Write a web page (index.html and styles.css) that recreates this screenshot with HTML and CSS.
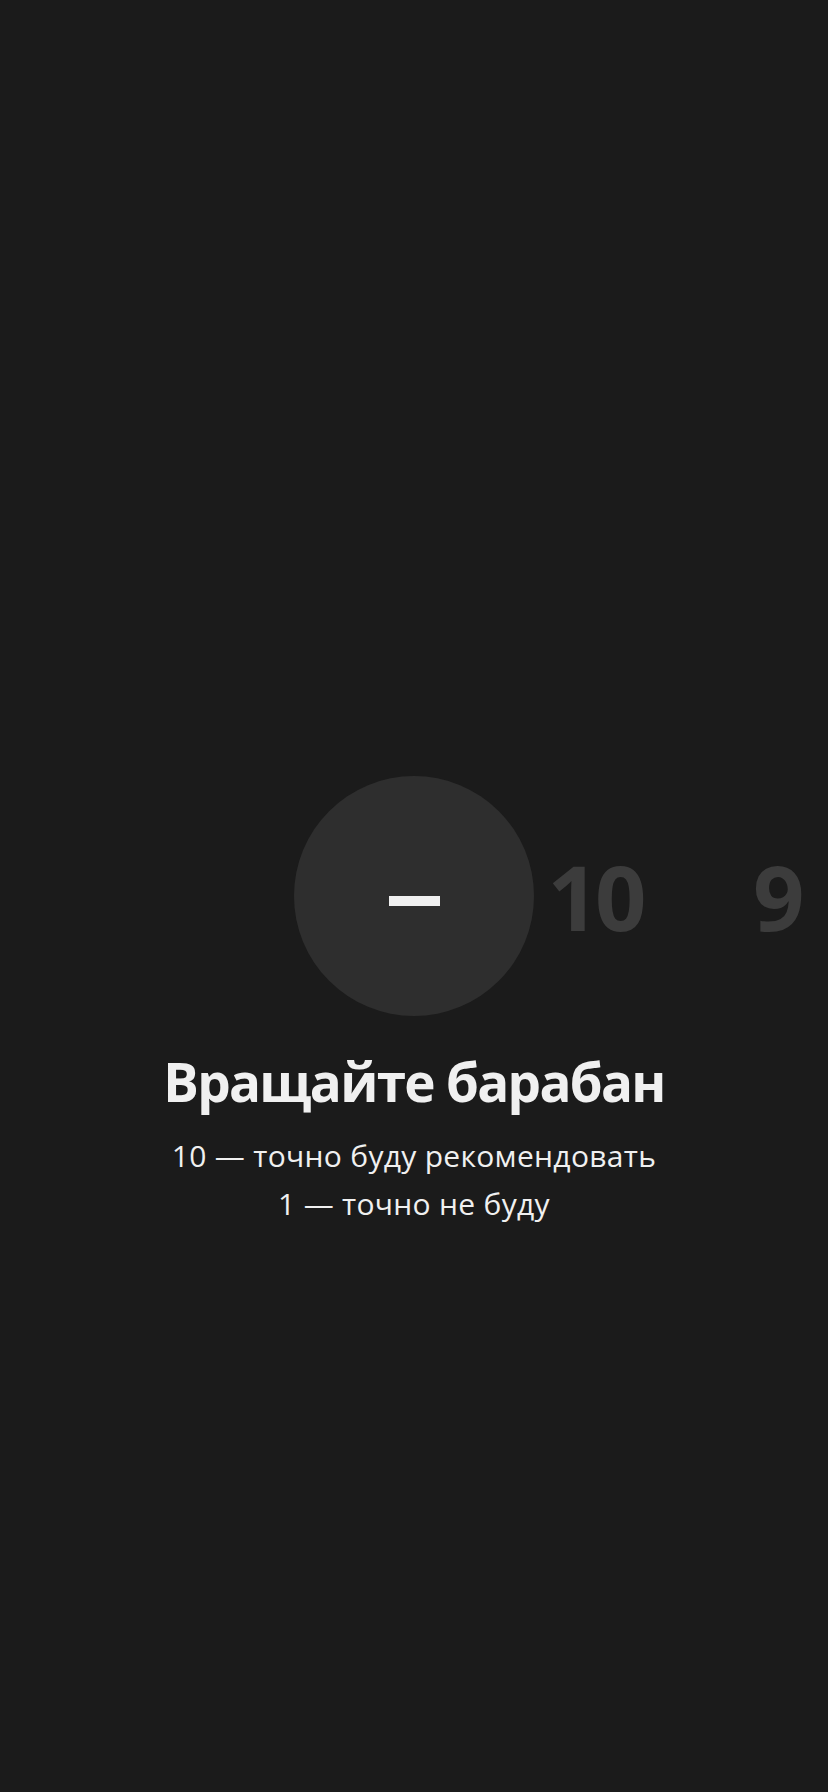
FILE: index.html
```html
<!DOCTYPE html>
<html lang="ru">
<head>
<meta charset="utf-8">
<link rel="stylesheet" href="styles.css">
</head>
<body>
<main class="screen">
  <div class="wheel">
    <div class="slot slot-current"><div class="bubble"><span class="dash"></span></div></div>
    <div class="slot">10</div>
    <div class="slot slot-last">9</div>
  </div>
  <h1 class="title">Вращайте барабан</h1>
  <p class="hint">10 — точно буду рекомендовать<br>1 — точно не буду</p>
</main>
</body>
</html>
```
FILE: styles.css
```css
html, body {
  margin: 0;
  padding: 0;
  background: #1b1b1b;
}
.screen {
  width: 828px;
  height: 1792px;
  box-sizing: border-box;
  padding-top: 776px;
  display: flex;
  flex-direction: column;
  align-items: center;
  overflow: hidden;
  font-family: "Open Sans", "Noto Sans", sans-serif;
}
.wheel {
  width: 828px;
  height: 240px;
  display: flex;
  align-items: center;
  padding-left: 322px;
  box-sizing: border-box;
  overflow: hidden;
}
.slot {
  flex: 0 0 184px;
  width: 184px;
  text-align: center;
  font-family: "Open Sans", sans-serif;
  font-weight: 700;
  font-size: 90px;
  line-height: 240px;
  letter-spacing: -4px;
  color: #3c3c3c;
}
.slot-last {
  flex: 0 0 auto;
  width: auto;
  margin-left: 66px;
}
.slot-current {
  display: flex;
  justify-content: center;
  margin-right: -3px;
}
.bubble {
  flex: 0 0 240px;
  width: 240px;
  height: 240px;
  margin: 0 -28px;
  border-radius: 50%;
  background: #2e2e2e;
  display: flex;
  align-items: center;
  justify-content: center;
}
.dash {
  width: 51px;
  height: 10px;
  margin-top: 10px;
  background: #f0f0f0;
}
.title {
  margin: 31px 0 0;
  font-family: "Open Sans", sans-serif;
  font-weight: 700;
  font-size: 53px;
  line-height: 70px;
  letter-spacing: -1.7px;
  color: #f0f0f0;
}
.hint {
  margin: 15px 0 0;
  text-align: center;
  font-family: "Open Sans", sans-serif;
  font-weight: 400;
  font-size: 30px;
  line-height: 48px;
  letter-spacing: 0.3px;
  color: #f0f0f0;
}
```
